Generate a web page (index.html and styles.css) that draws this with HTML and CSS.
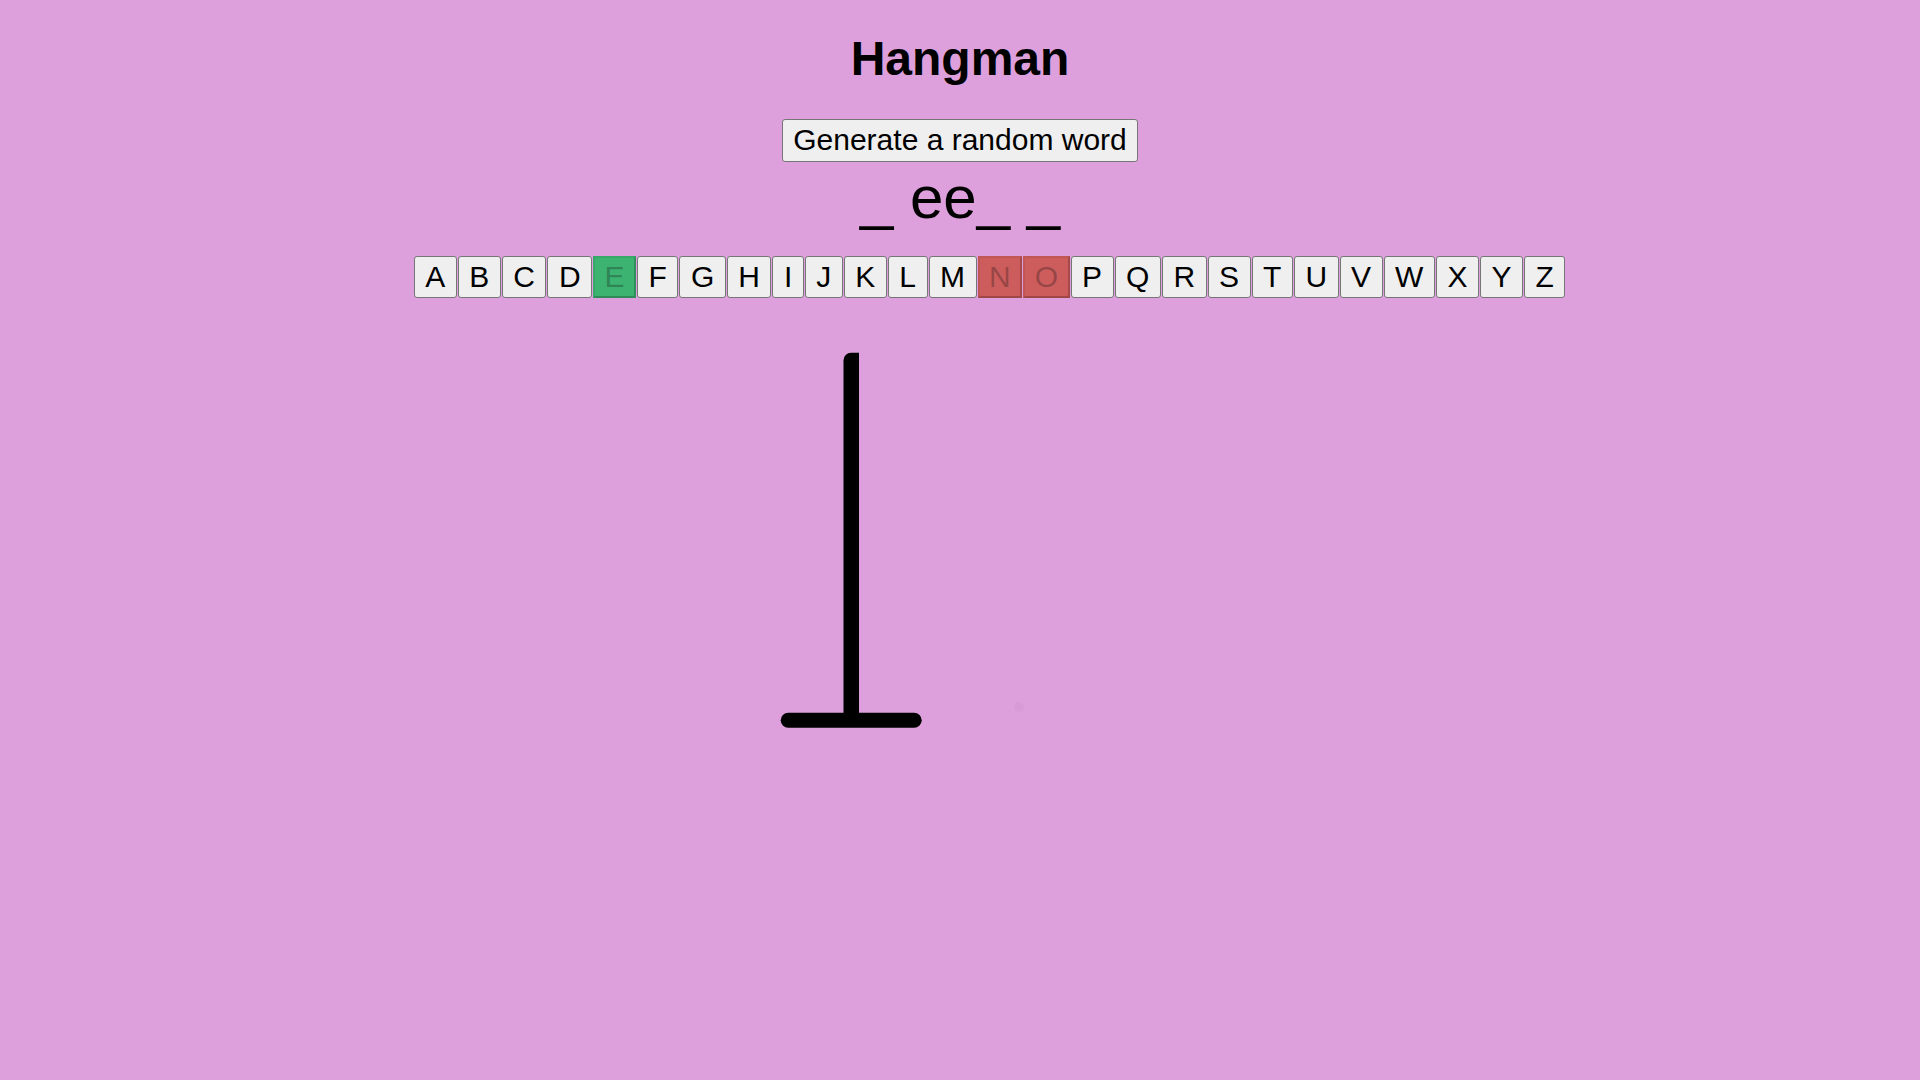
FILE: index.html
```html
<!DOCTYPE html>
<html lang="en">
<head>
<meta charset="utf-8">
<title>Hangman</title>
<link rel="stylesheet" href="styles.css">
</head>
<body>
<main class="game">
  <h1 class="title">Hangman</h1>
  <button class="btn generate">Generate a random word</button>
  <div class="word">_ ee_ _</div>
  <div class="letters">
    <button class="btn key">A</button>
    <button class="btn key">B</button>
    <button class="btn key">C</button>
    <button class="btn key">D</button>
    <button class="btn key hit" disabled>E</button>
    <button class="btn key">F</button>
    <button class="btn key">G</button>
    <button class="btn key">H</button>
    <button class="btn key">I</button>
    <button class="btn key">J</button>
    <button class="btn key">K</button>
    <button class="btn key">L</button>
    <button class="btn key">M</button>
    <button class="btn key miss" disabled>N</button>
    <button class="btn key miss" disabled>O</button>
    <button class="btn key">P</button>
    <button class="btn key">Q</button>
    <button class="btn key">R</button>
    <button class="btn key">S</button>
    <button class="btn key">T</button>
    <button class="btn key">U</button>
    <button class="btn key">V</button>
    <button class="btn key">W</button>
    <button class="btn key">X</button>
    <button class="btn key">Y</button>
    <button class="btn key">Z</button>
  </div>
  <svg class="gallows" width="400" height="450" viewBox="0 0 400 450" xmlns="http://www.w3.org/2000/svg">
    <path d="M83.5 420 V59.2 A7.5 7.5 0 0 1 91 51.7 H99 V420 Z" fill="#000"/>
    <line x1="28.2" y1="419.2" x2="154.2" y2="419.2" stroke="#000" stroke-width="15" stroke-linecap="round"/>
    <circle cx="259" cy="406" r="5" fill="#000" opacity="0.025"/>
  </svg>
</main>
</body>
</html>
```
FILE: styles.css
```css
html, body {
  margin: 0;
  padding: 0;
}

body {
  background: #dda0dd;
  font-family: "Liberation Sans", Arial, sans-serif;
  color: #000;
  min-height: 1080px;
}

.game {
  display: flex;
  flex-direction: column;
  align-items: center;
  padding-top: 31px;
}

.title {
  margin: 0;
  font-size: 48px;
  font-weight: bold;
  line-height: normal;
}

.btn {
  font-family: "Liberation Sans", Arial, sans-serif;
  font-size: 30px;
  line-height: 34.5px;
  color: #000;
  background: #efefef;
  border: 1px solid #767676;
  border-radius: 3px;
  padding: 3px 10.5px;
  margin: 0;
  box-sizing: content-box;
}

.generate {
  margin-top: 33px;
}

.word {
  font-size: 60px;
  line-height: 69px;
  margin-top: 1px;
  white-space: pre;
}

.letters {
  display: flex;
  gap: 1px;
  margin-top: 24px;
  padding-left: 59px;
}

.key.hit,
.key.miss {
  border-width: 2px;
  border-style: solid;
  border-radius: 0;
  padding: 2px 9.5px;
  color: rgba(16, 16, 16, 0.3);
}

.key.hit {
  background: #3cb371;
  border-color: rgba(0, 0, 0, 0.06) rgba(0, 0, 0, 0.2) rgba(0, 0, 0, 0.22) rgba(0, 0, 0, 0.06);
}

.key.miss {
  background: #cd5c5c;
  border-color: rgba(0, 0, 0, 0.06) rgba(0, 0, 0, 0.2) rgba(0, 0, 0, 0.22) rgba(0, 0, 0, 0.06);
}

.gallows {
  display: block;
  margin-top: 2.7px;
  margin-left: -1px;
}
```
